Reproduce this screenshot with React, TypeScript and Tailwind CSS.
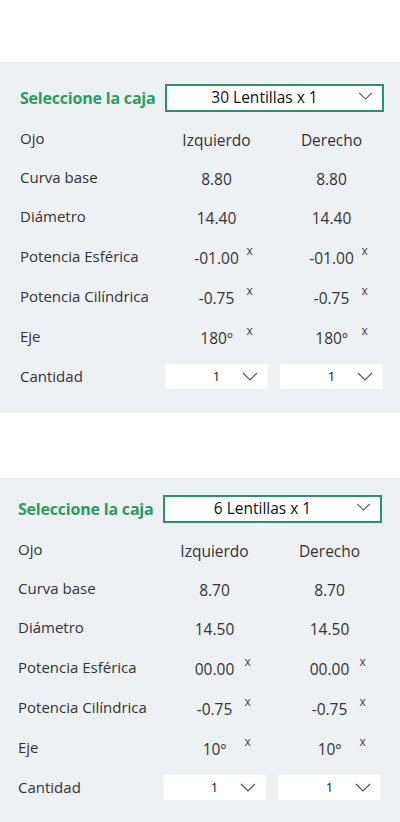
import type { ReactNode } from 'react';

interface Row {
  label: string;
  left: string;
  right: string;
  mark?: boolean;
  h: string;
}

interface LensPanelProps {
  box: string;
  rows: Row[];
  padTop: string;
  padLeft: string;
}

function Chevron({ className }: { className: string }) {
  return (
    <svg className={className} viewBox="0 0 16 9" fill="none" aria-hidden="true">
      <polyline points="1,1 8,8 15,1" stroke="#4b5563" strokeWidth="1.2" strokeLinejoin="miter" />
    </svg>
  );
}

function Cell({ children, mark }: { children: ReactNode; mark?: boolean }) {
  return (
    <div className="relative flex items-center justify-center text-[15.5px] text-[#333]">
      <span className="pt-[5px]">{children}</span>
      {mark && (
        <span className="absolute left-[calc(50%+30px)] top-[calc(50%-12px)] text-[12px] leading-[14px] text-[#444]">x</span>
      )}
    </div>
  );
}

function QtySelect() {
  return (
    <div className="relative flex h-[25px] items-center justify-center bg-white">
      <span className="text-[13px] text-[#111827]">1</span>
      <Chevron className="absolute right-[10px] top-[8px] h-[9px] w-[16px]" />
    </div>
  );
}

function LensPanel({ box, rows, padTop, padLeft }: LensPanelProps) {
  return (
    <section className={`bg-[#eef1f4] pr-[16px] ${padTop} ${padLeft} pb-[16px]`}>
      <div className="grid grid-cols-[145px_219px] items-center">
        <h2 className="text-[16px] font-bold tracking-[-0.2px] text-[#2a9b63]">Seleccione la caja</h2>
        <div className="relative flex h-[28px] items-center border-2 border-[#2f9166] bg-white pr-[20px]">
          <span className="flex-1 text-center text-[15.5px] text-[#111]">{box}</span>
          <Chevron className="absolute right-[9px] top-[6px] h-[8px] w-[15px]" />
        </div>
      </div>
      <div className="mt-[6px]">
        {rows.map((row) => (
          <div key={row.label} className={`grid grid-cols-[133px_103px_103px] gap-x-[12px] ${row.h}`}>
            <div className="flex items-center text-[15px] text-[#333]">{row.label}</div>
            {row.label === 'Cantidad' ? (
              <>
                <div className="flex items-center"><div className="w-full"><QtySelect /></div></div>
                <div className="flex items-center"><div className="w-full"><QtySelect /></div></div>
              </>
            ) : (
              <>
                <Cell mark={row.mark}>{row.left}</Cell>
                <Cell mark={row.mark}>{row.right}</Cell>
              </>
            )}
          </div>
        ))}
      </div>
    </section>
  );
}

const first: Row[] = [
  { label: 'Ojo', left: 'Izquierdo', right: 'Derecho', h: 'h-[40px]' },
  { label: 'Curva base', left: '8.80', right: '8.80', h: 'h-[38px]' },
  { label: 'Diámetro', left: '14.40', right: '14.40', h: 'h-[40px]' },
  { label: 'Potencia Esférica', left: '-01.00', right: '-01.00', mark: true, h: 'h-[40px]' },
  { label: 'Potencia Cilíndrica', left: '-0.75', right: '-0.75', mark: true, h: 'h-[40px]' },
  { label: 'Eje', left: '180º', right: '180º', mark: true, h: 'h-[40px]' },
  { label: 'Cantidad', left: '1', right: '1', h: 'h-[41px]' },
];

const second: Row[] = [
  { label: 'Ojo', left: 'Izquierdo', right: 'Derecho', h: 'h-[40px]' },
  { label: 'Curva base', left: '8.70', right: '8.70', h: 'h-[38px]' },
  { label: 'Diámetro', left: '14.50', right: '14.50', h: 'h-[40px]' },
  { label: 'Potencia Esférica', left: '00.00', right: '00.00', mark: true, h: 'h-[40px]' },
  { label: 'Potencia Cilíndrica', left: '-0.75', right: '-0.75', mark: true, h: 'h-[40px]' },
  { label: 'Eje', left: '10º', right: '10º', mark: true, h: 'h-[40px]' },
  { label: 'Cantidad', left: '1', right: '1', h: 'h-[41px]' },
];

export default function App() {
  return (
    <div className="min-h-[822px] bg-white pt-[62px] font-['Open_Sans','Noto_Sans',sans-serif]">
      <LensPanel box="30 Lentillas x 1" rows={first} padTop="pt-[22px]" padLeft="pl-[20px]" />
      <div className="h-[65px]" />
      <LensPanel box="6 Lentillas x 1" rows={second} padTop="pt-[17px]" padLeft="pl-[18px]" />
    </div>
  );
}
